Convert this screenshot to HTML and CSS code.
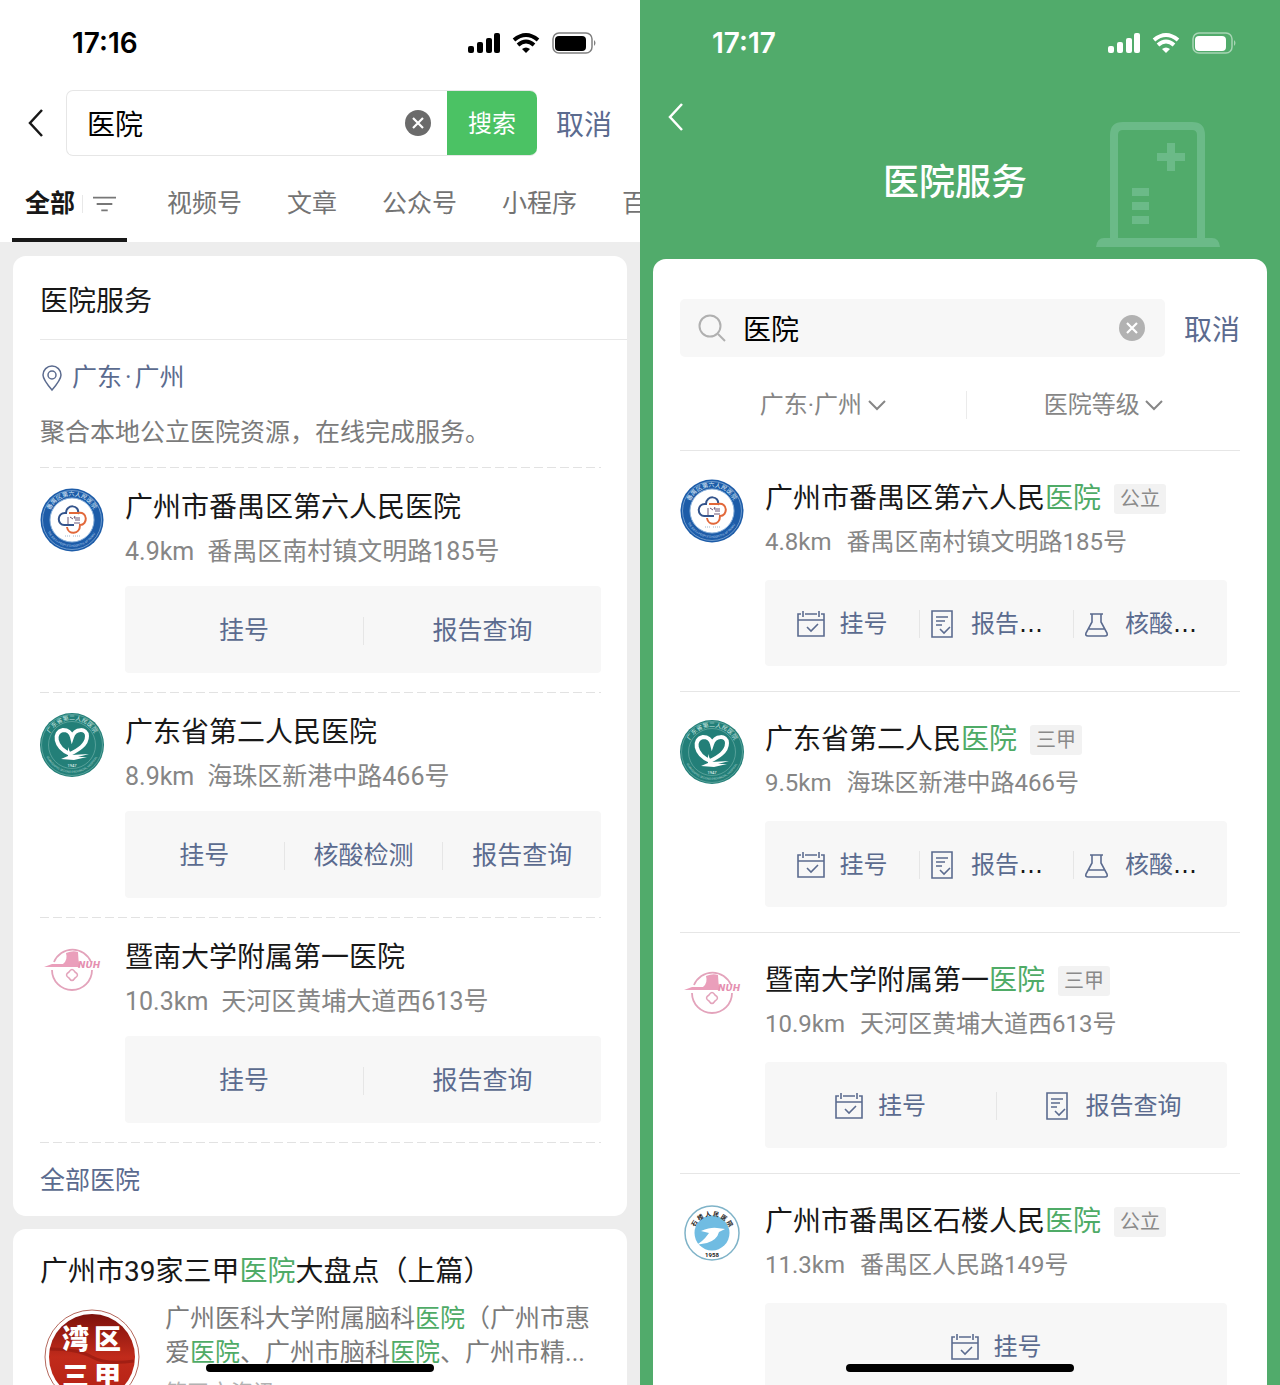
FILE: index.html
```html
<!DOCTYPE html>
<html lang="zh-CN">
<head>
  <meta charset="UTF-8">
  <meta name="viewport" content="width=device-width, initial-scale=1">
  <title>医院服务</title>
  <link rel="stylesheet" href="styles.css">
</head>
<body>
  <!-- shared icons and hospital logos -->
  <svg class="sprite" aria-hidden="true">
    <symbol id="status" viewBox="0 0 130 22">
      <g fill="currentColor">
        <rect x="0" y="14" width="6" height="7" rx="2"/>
        <rect x="9" y="10" width="6" height="11" rx="2"/>
        <rect x="18" y="6" width="6" height="15" rx="2"/>
        <rect x="26" y="1" width="6" height="20" rx="2"/>
        <path d="M58 21l-4-4q4-3 8 0z"/>
        <rect x="87" y="4" width="31" height="15" rx="4"/>
        <path d="M126 8q3 3 0 6z" opacity=".5"/>
      </g>
      <g fill="none" stroke="currentColor">
        <path d="M46 8q12-10 24 0" stroke-width="4"/>
        <path d="M50 13q8-7 16 0" stroke-width="4"/>
        <rect x="85" y="1" width="39" height="20" rx="6" stroke-width="1.5" opacity=".5"/>
      </g>
    </symbol>
    <symbol id="back" viewBox="0 0 18 30">
      <path d="M15 2L3 15l12 13" fill="none" stroke="currentColor" stroke-width="2.5"/>
    </symbol>
    <symbol id="clear" viewBox="0 0 26 26">
      <circle cx="13" cy="13" r="13" fill="currentColor"/>
      <path d="M8 8l10 10M18 8L8 18" stroke="#fff" stroke-width="2.2"/>
    </symbol>
    <symbol id="chevron" viewBox="0 0 18 12">
      <path d="M1 2l8 8 8-8" fill="none" stroke="currentColor" stroke-width="2"/>
    </symbol>
    <symbol id="calendar" viewBox="0 0 28 28">
      <path d="M4 4H1v22h26V4h-3M8 4h12M1 10h26M6 1v6M22 1v6M10 17l4 4 7-7" fill="none" stroke="currentColor" stroke-width="1.6"/>
    </symbol>
    <symbol id="report" viewBox="0 0 28 28">
      <path d="M4 1h20v26H4zM8 7h12M8 11h9M8 15h6M12 19l4 4 6-6" fill="none" stroke="currentColor" stroke-width="1.6"/>
    </symbol>
    <symbol id="flask" viewBox="0 0 28 28">
      <path d="M8 4h13M10 4v8L4 23q-1 3 2 3h17q3 0 2-3l-6-11V4M7 19h15" fill="none" stroke="currentColor" stroke-width="1.6"/>
    </symbol>
    <symbol id="logo-panyu" viewBox="0 0 64 64">
      <defs>
        <path id="panyu-top" d="M8 32a24 24 0 0 1 48 0"/>
        <path id="panyu-bottom" d="M5 32a27 27 0 0 0 54 0"/>
      </defs>
      <circle cx="32" cy="32" r="31.5" fill="#1d5ca8"/>
      <circle cx="32" cy="32" r="29.5" fill="none" stroke="#8fb4dc" stroke-width=".7"/>
      <circle cx="32" cy="32" r="22" fill="#fff" stroke="#8fb4dc"/>
      <text font-size="6" fill="#dce9f7"><textPath href="#panyu-top" startOffset="10">番禺区第六人民医院</textPath></text>
      <text font-size="3" fill="#b9d2ec"><textPath href="#panyu-bottom" startOffset="12">THE SIXTH PEOPLE'S HOSPITAL OF PANYU</textPath></text>
      <g fill="none" stroke-width="2">
        <path d="M38 26c2-10-12-10-12-1-10-1-9 13-1 12h9" stroke="#34548c"/>
        <path d="M29 25h9c10-2 10 12 2 12 0 10-12 10-13 2" stroke="#e2683a"/>
        <path d="M28 29v7M30 29l3 2M35 28l-1 2h6M35 32h5M34 35h6" stroke="#6a5577" stroke-width="1"/>
      </g>
      <path d="M25 48h5M33 48h7" stroke="#9fb6cc" stroke-dasharray="1 1"/>
    </symbol>
    <symbol id="logo-second" viewBox="0 0 64 64">
      <defs>
        <path id="second-top" d="M7 32a25 25 0 0 1 50 0"/>
        <path id="second-bottom" d="M4 32a28 28 0 0 0 56 0"/>
      </defs>
      <circle cx="32" cy="32" r="32" fill="#237f78"/>
      <circle cx="32" cy="32" r="30.500" fill="none" stroke="#79b5ae" stroke-width=".6"/>
      <circle cx="32" cy="32" r="23.500" fill="none" stroke="#79b5ae" stroke-width=".6"/>
      <text font-size="6" fill="#c9e5e0"><textPath href="#second-top" startOffset="12">广东省第二人民医院</textPath></text>
      <text font-size="3" fill="#a9d2cc"><textPath href="#second-bottom" startOffset="12">GUANGDONG SECOND PROVINCIAL HOSPITAL</textPath></text>
      <path d="M30 41C14 34 13 19 23 17c5 0 8 3 9 7 3-9 15-9 15-1 0 9-9 14-17 18z" fill="none" stroke="#fff" stroke-width="4"/>
      <path d="M28 34l3 8 18-1-11 3h9l-13 3-13-1 7-3z" fill="#fff"/>
      <text x="32" y="54" font-size="4" fill="#fff" text-anchor="middle">1947</text>
    </symbol>
    <symbol id="logo-jinan" viewBox="0 0 64 64">
      <g fill="none" stroke="#e3a3bb" stroke-width="1.8">
        <path d="M14 24a20 20 0 0 1 37 0M52 32a20 20 0 0 1-40 0"/>
        <path d="M29 34q3-5 6 0 5 3 0 6-3 5-6 0-5-3 0-6z" stroke-width="1.5"/>
      </g>
      <path d="M26 15q7-3 12-1 0 8 2 15H4l8-3h11q5-4 3-11z" fill="#ea9fbb"/>
      <text class="jinan-mark" x="38" y="30">NUH</text>
    </symbol>
    <symbol id="logo-shilou" viewBox="0 0 64 64">
      <defs><path id="shilou-top" d="M13 33a19 19 0 0 1 38 0"/></defs>
      <circle cx="32" cy="31" r="27" fill="#fff" stroke="#7fb3c8" stroke-width="1.5"/>
      <circle cx="32" cy="31" r="17.500" fill="#70bce2"/>
      <text font-size="6" font-weight="700" fill="#222"><textPath href="#shilou-top" startOffset="8">石 楼 人 民 医 院</textPath></text>
      <path d="M14 44q8-3 15-13l-8-2q10-4 16-3l8 1-6 3q-2 8-12 11-8 1-13 3z" fill="#fff"/>
      <text x="32" y="55" font-size="6" font-weight="700" fill="#222" text-anchor="middle">1958</text>
    </symbol>
  </svg>

  <section class="phone search-page">
    <div class="status">
      <span class="time">17:16</span>
      <svg class="status-icons"><use href="#status"/></svg>
    </div>
    <div class="topbar">
      <button class="back" aria-label="返回"><svg><use href="#back"/></svg></button>
      <form class="searchbox">
        <input type="text" value="医院" aria-label="搜索内容">
        <button type="reset" class="clear" aria-label="清除"><svg><use href="#clear"/></svg></button>
        <button type="button" class="submit">搜索</button>
      </form>
      <a href="#" class="cancel">取消</a>
    </div>
    <nav class="tabs">
      <a href="#" class="tab active">全部
        <svg class="sort" viewBox="0 0 25 18"><path d="M0 2h25M4 9h17M9 16h7" stroke="#777" stroke-width="2"/></svg>
      </a>
      <a href="#" class="tab">视频号</a>
      <a href="#" class="tab">文章</a>
      <a href="#" class="tab">公众号</a>
      <a href="#" class="tab">小程序</a>
      <a href="#" class="tab">百科</a>
    </nav>

    <main class="results">
      <section class="card">
        <h2 class="card-title">医院服务</h2>
        <div class="intro">
          <a href="#" class="location">
            <svg viewBox="0 0 22 28"><path d="M11 26C5 19 2 15 2 11a9 9 0 0 1 18 0c0 4-3 8-9 15z" fill="none" stroke="currentColor" stroke-width="1.5"/><circle cx="11" cy="11" r="4" fill="none" stroke="currentColor" stroke-width="1.5"/></svg>
            <span>广东<span class="dot">·</span>广州</span>
          </a>
          <p>聚合本地公立医院资源，在线完成服务。</p>
        </div>
        <article class="hospital">
          <svg class="logo"><use href="#logo-panyu"/></svg>
          <div class="info">
            <h3>广州市番禺区第六人民医院</h3>
            <p class="address"><span>4.9km</span><span>番禺区南村镇文明路185号</span></p>
            <div class="actions">
              <button>挂号</button>
              <button>报告查询</button>
            </div>
          </div>
        </article>
        <article class="hospital">
          <svg class="logo"><use href="#logo-second"/></svg>
          <div class="info">
            <h3>广东省第二人民医院</h3>
            <p class="address"><span>8.9km</span><span>海珠区新港中路466号</span></p>
            <div class="actions">
              <button>挂号</button>
              <button>核酸检测</button>
              <button>报告查询</button>
            </div>
          </div>
        </article>
        <article class="hospital">
          <svg class="logo"><use href="#logo-jinan"/></svg>
          <div class="info">
            <h3>暨南大学附属第一医院</h3>
            <p class="address"><span>10.3km</span><span>天河区黄埔大道西613号</span></p>
            <div class="actions">
              <button>挂号</button>
              <button>报告查询</button>
            </div>
          </div>
        </article>
        <a href="#" class="more">全部医院</a>
      </section>

      <section class="card article">
        <h2>广州市39家三甲<em>医院</em>大盘点（上篇）</h2>
        <div class="article-body">
          <svg class="badge" viewBox="0 0 96 96">
            <defs>
              <linearGradient id="red" x1="0" y1="0" x2="0" y2="1">
                <stop offset="0" stop-color="#7d120c"/>
                <stop offset=".5" stop-color="#c12b1b"/>
                <stop offset="1" stop-color="#b32015"/>
              </linearGradient>
            </defs>
            <circle cx="48" cy="48" r="47" fill="#fff" stroke="#b5685c"/>
            <circle cx="48" cy="48" r="43" fill="url(#red)"/>
            <path d="M6 40q28 0 42 8t42 4" fill="none" stroke="#8e170f" stroke-width="3" opacity=".6"/>
            <g fill="#fff" font-size="27" font-weight="900">
              <text x="18" y="40">湾</text><text x="50" y="40">区</text>
              <text x="18" y="77">三</text><text x="50" y="77">甲</text>
            </g>
          </svg>
          <div class="article-text">
            <p>广州医科大学附属脑科<em>医院</em>（广州市惠爱<em>医院</em>、广州市脑科<em>医院</em>、广州市精...</p>
            <p class="source">第四方资讯</p>
          </div>
        </div>
      </section>
    </main>
    <div class="home-bar"></div>
  </section>

  <section class="phone service-page">
    <div class="status">
      <span class="time">17:17</span>
      <svg class="status-icons"><use href="#status"/></svg>
    </div>
    <header class="hero">
      <button class="back" aria-label="返回"><svg><use href="#back"/></svg></button>
      <h1>医院服务</h1>
      <svg class="building" viewBox="0 0 124 126">
        <path d="M18 118V14q0-9 9-9h69q9 0 9 9v104" fill="none" stroke="currentColor" stroke-width="8"/>
        <path d="M0 126q1-9 8-9h108q7 0 8 9zM61 32h10V22h8v10h10v8H79v10h-8V40H61zM36 67h17v8H36zM36 81h17v8H36zM36 95h17v8H36z" fill="currentColor"/>
      </svg>
    </header>
    <main class="panel">
      <div class="panel-search">
        <form class="searchbox">
          <svg class="lens" viewBox="0 0 28 28"><circle cx="12" cy="12" r="10.500" fill="none" stroke="currentColor" stroke-width="2"/><path d="M20 20l7 7" stroke="currentColor" stroke-width="2"/></svg>
          <input type="text" value="医院" aria-label="搜索医院">
          <button type="reset" class="clear" aria-label="清除"><svg><use href="#clear"/></svg></button>
        </form>
        <a href="#" class="cancel">取消</a>
      </div>
      <div class="filters">
        <label class="filter">
          <select aria-label="地区"><option>广东·广州</option></select>
          <svg><use href="#chevron"/></svg>
        </label>
        <label class="filter">
          <select aria-label="医院等级"><option>医院等级</option></select>
          <svg><use href="#chevron"/></svg>
        </label>
      </div>
      <article class="hospital">
        <svg class="logo"><use href="#logo-panyu"/></svg>
        <div class="info">
          <h3>广州市番禺区第六人民<em>医院</em><span class="tag">公立</span></h3>
          <p class="address"><span>4.8km</span><span>番禺区南村镇文明路185号</span></p>
          <div class="actions">
            <button><svg><use href="#calendar"/></svg>挂号</button>
            <button class="tight"><svg><use href="#report"/></svg><span>报告<i>…</i></span></button>
            <button class="tight"><svg><use href="#flask"/></svg><span>核酸<i>…</i></span></button>
          </div>
        </div>
      </article>
      <article class="hospital">
        <svg class="logo"><use href="#logo-second"/></svg>
        <div class="info">
          <h3>广东省第二人民<em>医院</em><span class="tag">三甲</span></h3>
          <p class="address"><span>9.5km</span><span>海珠区新港中路466号</span></p>
          <div class="actions">
            <button><svg><use href="#calendar"/></svg>挂号</button>
            <button class="tight"><svg><use href="#report"/></svg><span>报告<i>…</i></span></button>
            <button class="tight"><svg><use href="#flask"/></svg><span>核酸<i>…</i></span></button>
          </div>
        </div>
      </article>
      <article class="hospital">
        <svg class="logo"><use href="#logo-jinan"/></svg>
        <div class="info">
          <h3>暨南大学附属第一<em>医院</em><span class="tag">三甲</span></h3>
          <p class="address"><span>10.9km</span><span>天河区黄埔大道西613号</span></p>
          <div class="actions">
            <button><svg><use href="#calendar"/></svg>挂号</button>
            <button><svg><use href="#report"/></svg>报告查询</button>
          </div>
        </div>
      </article>
      <article class="hospital">
        <svg class="logo"><use href="#logo-shilou"/></svg>
        <div class="info">
          <h3>广州市番禺区石楼人民<em>医院</em><span class="tag">公立</span></h3>
          <p class="address"><span>11.3km</span><span>番禺区人民路149号</span></p>
          <div class="actions">
            <button><svg><use href="#calendar"/></svg>挂号</button>
          </div>
        </div>
      </article>
    </main>
    <div class="home-bar"></div>
  </section>
</body>
</html>
```
FILE: styles.css
```css
* { box-sizing: border-box; margin: 0; padding: 0; }
body { display: flex; height: 100vh; overflow: hidden; font-family: Roboto, "Noto Sans CJK SC", sans-serif; font-size: 25px; line-height: 40px; color: #181818; }
button, input, select { font: inherit; color: inherit; background: none; border: 0; outline: 0; }
button { cursor: pointer; }
a { color: #5b6b8f; text-decoration: none; }
em { font-style: normal; color: #4fab67; }
h1, h2, h3 { font-weight: 400; }
.sprite { position: absolute; width: 0; height: 0; }

.phone { position: relative; flex: 1; min-width: 0; display: flex; flex-direction: column; overflow: hidden; }
.search-page { background: #ededed; }
.service-page { background: #51ab6b; }
.home-bar { position: absolute; left: 50%; bottom: 13px; width: 228px; height: 8px; margin-left: -114px; border-radius: 4px; background: #000; }

/* status bar */
.status { flex: none; display: flex; align-items: center; justify-content: space-between; height: 86px; padding: 0 42px 0 72px; color: #000; }
.search-page .status { background: #fff; }
.service-page .status { color: #fff; }
.time { font-family: Inter, sans-serif; font-size: 28px; font-weight: 600; }
.status-icons { width: 130px; height: 22px; }

/* search row */
.topbar { flex: none; display: flex; align-items: center; padding: 4px 28px 0 27px; background: #fff; }
.back { display: flex; width: 18px; height: 30px; }
.back svg { width: 18px; height: 30px; }
.searchbox { display: flex; align-items: center; flex: 1; min-width: 0; }
.searchbox input { flex: 1; min-width: 0; padding-top: 5px; font-size: 28px; color: #000; }
.clear { display: flex; width: 26px; height: 26px; }
.clear svg { width: 26px; height: 26px; }
.cancel { padding-top: 5px; font-size: 28px; }
.topbar .searchbox { height: 66px; margin: 0 19px 0 21px; padding-left: 20px; border: 1px solid #e6e6e6; border-right: 0; border-radius: 7px; }
.topbar .clear { margin-right: 16px; color: #6b6b6b; }
.submit { align-self: stretch; width: 90px; padding-top: 2px; border-radius: 0 7px 7px 0; background: #4bc264; color: #fff; font-size: 24px; }

.tabs { flex: none; display: flex; gap: 45px; height: 86px; padding: 0 0 0 12px; background: #fff; overflow: hidden; }
.tab { flex: none; padding-top: 28px; color: #737373; }
.tab.active { display: flex; width: 115px; height: 86px; margin-right: -5px; padding-left: 13px; border-bottom: 4px solid #181818; color: #181818; font-weight: 700; }
.sort { width: 34px; height: 18px; margin: 11px 0 0 7px; padding-left: 10px; border-left: 1px solid #e8e8e8; }

/* result cards */
.results { padding: 14px 13px 0; }
.card { margin-bottom: 13px; border-radius: 13px; background: #fff; padding-left: 27px; }
.card-title { padding: 26px 0 17px; border-bottom: 1px solid #e8e8e8; font-size: 28px; }
.intro { padding: 18px 0 14px; color: #7b7b7b; }
.location { display: flex; align-items: center; gap: 8px; margin-bottom: 15px; }
.location svg { width: 24px; height: 28px; }
.dot { margin: 0 3px; }

.hospital { display: flex; gap: 21px; }
.logo { flex: none; width: 64px; height: 64px; margin-top: 2px; }
.info { flex: 1; min-width: 0; }
.info h3 { display: flex; align-items: center; font-size: 28px; line-height: 43px; }
.address { display: flex; gap: 13px; line-height: 45px; color: #868686; }
.actions { display: grid; grid-auto-flow: column; grid-auto-columns: minmax(0, 1fr); align-items: center; height: 87px; padding-top: 2px; border-radius: 4px; background: #f7f7f7; }
.actions button { display: flex; align-items: center; justify-content: center; height: 28px; color: #5b6b8f; white-space: nowrap; }
.actions button + button { border-left: 1px solid #e6e6e6; }

.card .hospital, .more { background: repeating-linear-gradient(90deg, #e2e2e2 0 9px, transparent 9px 13px) top / 100% 1px no-repeat; }
.card .hospital { margin-right: 26px; padding: 19px 0; }
.card .actions { margin-top: 12px; }
.more { display: block; margin-right: 26px; padding: 19px 0 15px; }

.article { padding: 23px 26px 40px 27px; }
.article h2 { font-size: 28px; }
.article-body { display: flex; gap: 25px; margin-top: 10px; }
.badge { flex: none; width: 96px; height: 96px; margin: 7px 0 0 4px; }
.article-text { line-height: 34px; color: #7b7b7b; }
.source { margin-top: 6px; font-size: 22px; color: #b2b2b2; }

/* hospital service page */
.hero { flex: none; display: grid; grid-template-columns: 1fr auto 1fr; height: 173px; padding: 0 37px 0 27px; color: #fff; }
.hero .back { margin-top: 16px; }
.hero h1 { margin-top: 73px; font-size: 36px; font-weight: 500; line-height: 48px; }
.building { justify-self: end; width: 124px; height: 126px; margin: 35px 23px 0 0; color: #6bba88; }

.panel { flex: 1; margin: 0 13px; padding: 40px 27px 0; border-radius: 13px 13px 0 0; background: #fff; }
.panel-search { display: flex; align-items: center; gap: 19px; }
.panel-search .searchbox { height: 58px; padding: 0 20px 0 18px; border-radius: 5px; background: #f7f7f7; }
.lens { width: 28px; height: 28px; margin-right: 17px; color: #b0b0b0; }
.panel-search .clear { color: #b2b2b2; }

.filters { display: grid; grid-template-columns: 51% 49%; align-items: center; height: 93px; padding-top: 2px; font-size: 24px; color: #868686; }
.filter { display: flex; align-items: center; justify-content: center; gap: 5px; height: 28px; }
.filter + .filter { border-left: 1px solid #ebebeb; }
.filter select { appearance: none; }
.filter svg { width: 18px; height: 12px; pointer-events: none; }

.panel .hospital { padding: 26px 13px 25px 0; border-top: 1px solid #e6e6e6; }
.panel .address { gap: 15px; font-size: 24px; }
.panel .actions { height: 86px; margin-top: 15px; font-size: 24px; }
.panel .actions button { gap: 15px; }
.panel .actions .tight { justify-content: flex-start; padding-left: 8px; }
.actions svg { flex: none; width: 28px; height: 28px; }
.actions i { font-family: "DejaVu Sans", sans-serif; font-style: normal; color: #181818; }
.tag { height: 30px; margin-left: 13px; padding: 0 6px; border-radius: 3px; background: #f2f2f2; font-size: 20px; line-height: 30px; color: #8a8a8a; }

.jinan-mark { font-family: "DejaVu Sans", sans-serif; font-size: 9px; font-weight: 700; font-style: italic; fill: #e58fb0; }
```
